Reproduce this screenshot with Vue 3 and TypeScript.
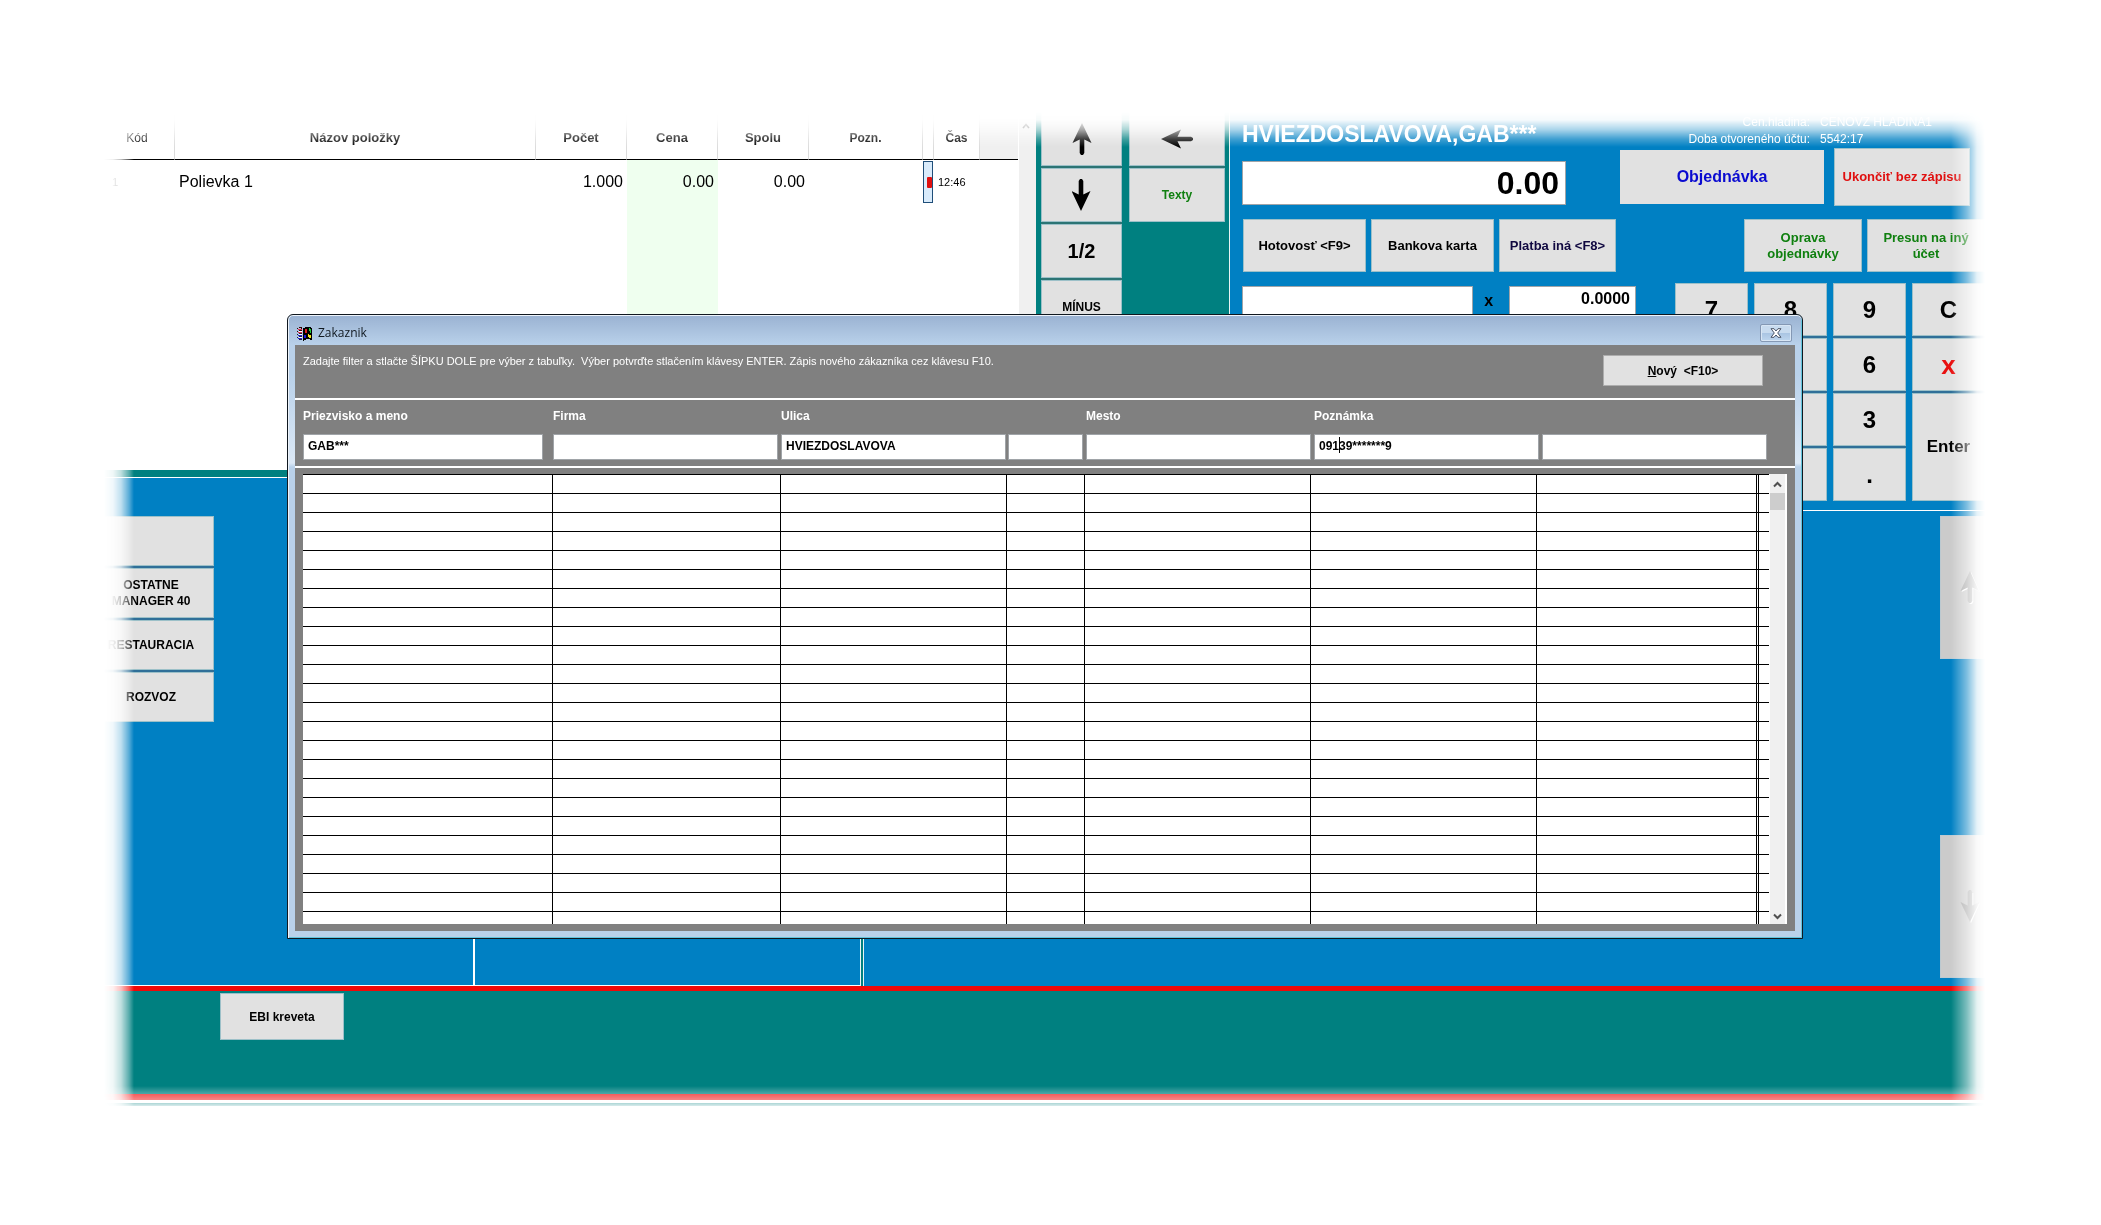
<script setup lang="ts">
import { ref } from 'vue'

interface FilterField {
  id: string
  label: string
  value: string
  gap: number
}

const filters = ref<FilterField[]>([
  { id: 'name', label: 'Priezvisko a meno', value: 'GAB***', gap: 10 },
  { id: 'company', label: 'Firma', value: '', gap: 3 },
  { id: 'street', label: 'Ulica', value: 'HVIEZDOSLAVOVA', gap: 2 },
  { id: 'number', label: '', value: '', gap: 3 },
  { id: 'city', label: 'Mesto', value: '', gap: 3 },
  { id: 'note', label: 'Poznámka', value: '09139*******9', gap: 3 },
  { id: 'extra', label: '', value: '', gap: 0 },
])

const gridRows = 24
const gridCols = ['auto', 'c228', 'c226', 'c78', 'c226', 'c226', 'c220', 'c2', 'c10']

const keypad: string[][] = [
  ['7'],
  ['8', '', '', ''],
  ['9', '6', '3', '.'],
]

const groups = ['', 'OSTATNE\nMANAGER 40', 'RESTAURACIA', 'ROZVOZ']

const total = ref('0.00')
const code = ref('')
const amount = ref('0.0000')
</script>

<template>
  <div class="page">
    <main class="stage">
      <div class="top">
        <div class="left">
          <div class="order">
            <div class="sheet">
              <table class="items">
                <colgroup>
                  <col class="w-code" /><col /><col class="w-num" /><col class="w-num price" /><col class="w-num" />
                  <col class="w-note" /><col class="w-mark" /><col class="w-time" /><col class="w-end" />
                </colgroup>
                <thead>
                  <tr>
                    <th class="thin">Kód</th>
                    <th>Názov položky</th>
                    <th>Počet</th>
                    <th>Cena</th>
                    <th>Spolu</th>
                    <th class="small">Pozn.</th>
                    <th></th>
                    <th class="small">Čas</th>
                    <th class="rest"></th>
                  </tr>
                </thead>
                <tbody>
                  <tr class="item">
                    <td class="idx">1</td>
                    <td class="name">Polievka 1</td>
                    <td class="num">1.000</td>
                    <td class="num">0.00</td>
                    <td class="num">0.00</td>
                    <td></td>
                    <td class="flag"><span class="marker"><i></i></span></td>
                    <td class="time">12:46</td>
                    <td></td>
                  </tr>
                  <tr><td v-for="n in 9" :key="n"></td></tr>
                </tbody>
              </table>
              <div class="side-scroll">
                <svg width="8" height="6" viewBox="0 0 8 6"><path d="M1 5 4 1.5 7 5" fill="none" stroke="#606060" stroke-width="1.6" /></svg>
              </div>
            </div>
            <div class="functions">
              <div class="fcol first">
                <button type="button" aria-label="Hore">
                  <svg width="20" height="32" viewBox="0 0 20 32"><path d="M10 0 19.5 20 12.3 16.5V30L11 32H9L7.700 30V16.500L.5 20Z" /></svg>
                </button>
                <button type="button" aria-label="Dole">
                  <svg width="20" height="32" viewBox="0 0 20 32"><path d="M9 32 -.5 12 6.700 15.500V2L8 0H10L11.300 2V15.500L18.500 12Z" /></svg>
                </button>
                <button type="button" class="t20">1/2</button>
                <button type="button" class="t12">MÍNUS</button>
              </div>
              <div class="fcol second">
                <button type="button" aria-label="Späť">
                  <svg width="32" height="20" viewBox="0 0 32 20"><path d="M0 10 20 .5 16.500 7.700H30L32 9V11L30 12.300H16.500L20 19.500Z" /></svg>
                </button>
                <button type="button" class="t12 green">Texty</button>
              </div>
            </div>
          </div>
          <div class="strip"></div>
        </div>

        <section class="account">
          <div class="head">
            <div class="head-left">
              <h1>HVIEZDOSLAVOVA,GAB***</h1>
              <input v-model="total" class="total" aria-label="Suma" />
            </div>
            <div class="head-right">
              <dl class="info">
                <dt>Cen.hladina:</dt><dd>CENOVZ HLADINA1</dd>
                <dt>Doba otvoreného účtu:</dt><dd>5542:17</dd>
              </dl>
              <div class="actions">
                <button type="button" class="order-btn">Objednávka</button>
                <button type="button" class="quit-btn">Ukončiť bez zápisu</button>
              </div>
            </div>
          </div>
          <div class="payments">
            <button type="button" class="pay">Hotovosť &lt;F9&gt;</button>
            <button type="button" class="pay">Bankova karta</button>
            <button type="button" class="pay other">Platba iná &lt;F8&gt;</button>
            <button type="button" class="fix push green">Oprava<br />objednávky</button>
            <button type="button" class="fix green">Presun na iný<br />účet</button>
          </div>
          <div class="entry">
            <input v-model="code" class="code" aria-label="Kód položky" />
            <span class="times">x</span>
            <input v-model="amount" class="amount" aria-label="Množstvo" />
            <div class="keypad">
              <div v-for="(col, i) in keypad" :key="i" class="kcol">
                <button v-for="(k, j) in col" :key="j" type="button">{{ k }}</button>
              </div>
              <div class="kcol">
                <button type="button">C</button>
                <button type="button" class="red">x</button>
                <button type="button" class="enter">Enter</button>
              </div>
            </div>
          </div>
        </section>
      </div>

      <div class="middle">
        <div class="pane groups">
          <div class="group-list">
            <button v-for="(g, i) in groups" :key="i" type="button">{{ g }}</button>
          </div>
        </div>
        <div class="pane centre"></div>
        <div class="divider"></div>
        <div class="pane goods">
          <div class="pager">
            <button type="button" disabled aria-label="Predošlá strana">
              <svg width="20" height="34" viewBox="0 0 20 34"><path d="M11 1 20 21 13.300 17.500V31L12 33H10L8.700 31V17.500L1.500 21Z" fill="#fff" /><path d="M10 0 19 20 12.300 16.500V30L11 32H9L7.700 30V16.500L.5 20Z" fill="#a6a6a6" /></svg>
            </button>
            <button type="button" disabled aria-label="Ďalšia strana">
              <svg width="20" height="34" viewBox="0 0 20 34"><path d="M11 33 1.500 13 8.700 16.500V3H13.300V16.500L20 13Z" fill="#fff" /><path d="M10 32 .5 12 7.700 15.500V2L9 0H11L12.300 2V15.500L19.500 12Z" fill="#a6a6a6" /></svg>
            </button>
          </div>
        </div>
      </div>

      <footer class="bottom">
        <button type="button">EBI kreveta</button>
      </footer>
      <div class="edge"></div>

      <section class="window" role="dialog" aria-labelledby="win-title">
        <header class="titlebar">
          <svg class="logo" width="16" height="15" viewBox="0 0 16 15" shape-rendering="crispEdges">
            <path d="M6 2h2V1h6v1h1v12h-2v-1H9v1H7v1H6Z" fill="#000" />
            <path d="M0 2h1v1H0zM0 5h1v1H0zM2 1h3v1H2zM2 4h3v1H2zM4 2h1v1H4z" fill="#300" />
            <path d="M1 3h4v1H1zM1 6h4v1H1z" fill="#e03050" />
            <path d="M1 9h4v1H1zM1 12h4v1H1z" fill="#2020d0" />
            <path d="M2 5h3v1H2zM2 8h3v1H2zM2 11h3v1H2z" fill="#fff" />
            <path d="M0 8h1v1H0zM0 11h1v1H0zM2 7h3v1H2zM2 10h3v1H2zM2 13h3v1H2z" fill="#223" />
            <path d="M8 3h2v4H8z" fill="#e02020" />
            <path d="M12 2h1v1h1v4h-1V5h-1z" fill="#20d040" />
            <path d="M7 9h2v3H7z" fill="#1818e0" />
            <path d="M11 8h1v1h2v3h-2v-1h-1z" fill="#f0e820" />
          </svg>
          <h2 id="win-title">Zakaznik</h2>
          <button type="button" class="close" aria-label="Zavrieť">
            <svg width="12" height="10" viewBox="0 0 12 10"><path d="M1 .7H4L6 3 8 .7H11L7.700 5 11 9.300H8L6 7 4 9.300H1L4.300 5Z" fill="#fff" stroke="#4a5568" stroke-width="1" /></svg>
          </button>
        </header>
        <div class="body">
          <div class="hint">
            <p>Zadajte filter a stlačte ŠÍPKU DOLE pre výber z tabuľky.&nbsp; Výber potvrďte stlačením klávesy ENTER. Zápis nového zákazníka cez klávesu F10.</p>
            <button type="button"><span><u>N</u>ový&nbsp; &lt;F10&gt;</span></button>
          </div>
          <form class="filters" @submit.prevent>
            <div v-for="f in filters" :key="f.id" class="field" :style="{ paddingRight: f.gap + 'px' }">
              <label :for="f.id">{{ f.label }}</label>
              <input :id="f.id" v-model="f.value" type="text" autocomplete="off" />
              <span v-if="f.id === 'note'" class="caret"></span>
            </div>
          </form>
          <div class="list">
            <div class="clip">
              <table class="customers">
                <colgroup><col v-for="(c, i) in gridCols" :key="i" :class="c" /></colgroup>
                <tbody>
                  <tr v-for="r in gridRows" :key="r"><td v-for="(c, i) in gridCols" :key="i"></td></tr>
                </tbody>
              </table>
            </div>
            <div class="scroll">
              <svg width="9" height="7" viewBox="0 0 9 7"><path d="M1 5.500 4.500 2 8 5.500" fill="none" stroke="#505050" stroke-width="2" /></svg>
              <div class="thumb"></div>
              <svg class="down" width="9" height="7" viewBox="0 0 9 7"><path d="M1 1.500 4.500 5 8 1.500" fill="none" stroke="#505050" stroke-width="2" /></svg>
            </div>
          </div>
        </div>
      </section>
    </main>
  </div>
</template>

<style>
body {
  margin: 0;
  background: #fff;
}
</style>

<style scoped>
* {
  box-sizing: border-box;
}
.page {
  padding: 112px 116px 119px 88px;
  font-family: "Liberation Sans", Arial, sans-serif;
  font-size: 12px;
  color: #000;
}
.stage {
  position: relative;
  overflow: hidden;
  background: #0080c3;
  mask-image:
    linear-gradient(to right, transparent 16px, rgba(0, 0, 0, 0.06) 25px, rgba(0, 0, 0, 0.25) 33px, rgba(0, 0, 0, 0.65) 41px, #000 46px, #000 calc(100% - 34px), rgba(0, 0, 0, 0.5) calc(100% - 18px), rgba(0, 0, 0, 0.1) calc(100% - 8px), transparent),
    linear-gradient(to bottom, transparent, rgba(0, 0, 0, 0.04) 8px, rgba(0, 0, 0, 0.35) 18px, rgba(0, 0, 0, 0.75) 27px, #000 35px, #000 calc(100% - 20px), rgba(0, 0, 0, 0.65) calc(100% - 11px), rgba(0, 0, 0, 0.5) calc(100% - 6px), rgba(0, 0, 0, 0.15) 100%);
  mask-composite: intersect;
}
button {
  font: bold 12px/16px "Liberation Sans", Arial, sans-serif;
  color: #000;
  padding: 0;
  border: 1px solid #9cc0c8;
  border-radius: 0;
  background: #e1e1e1;
  display: flex;
  align-items: center;
  justify-content: center;
  text-align: center;
  white-space: pre-line;
}
input {
  font: bold 12px/16px "Liberation Sans", Arial, sans-serif;
  color: #000;
  border: 1px solid #a0a4a8;
  border-radius: 0;
  background: #fff;
  outline: none;
  min-width: 0;
}
button.t12 { font-size: 12px; }
button.t20 { font-size: 20px; }
button.green { color: #108010; }

.top {
  display: flex;
}
.left {
  flex: 1;
  min-width: 0;
}
.order {
  display: flex;
  height: 358px;
}
.sheet {
  flex: 1;
  min-width: 0;
  display: flex;
  background: #fff;
}
.items {
  flex: 1;
  min-width: 0;
  height: 358px;
  table-layout: fixed;
  border-collapse: separate;
  border-spacing: 0;
}
.items .w-code { width: 87px; }
.items .w-num { width: 91px; }
.items .price { background: #efffef; }
.items .w-note { width: 114px; }
.items .w-mark { width: 11px; }
.items .w-time { width: 46px; }
.items .w-end { width: 38px; }
.items th {
  height: 48px;
  padding: 4px 0 0;
  border-bottom: 1px solid #000;
  border-right: 1px solid #dcdcdc;
  background: #fff;
  font-size: 13px;
  line-height: 16px;
}
.items th.thin {
  padding-left: 12px;
  font-size: 12px;
  font-weight: normal;
}
.items th.small {
  font-size: 12px;
}
.items th.rest {
  background: #f0f0f0;
  border-right: 0;
}
.items td {
  padding: 0;
}
.items .item td {
  height: 44px;
}
.items .name {
  padding-left: 4px;
  font-size: 16px;
}
.items .num {
  padding-right: 4px;
  font-size: 16px;
  text-align: right;
}
.items .idx,
.items .time {
  font-size: 11px;
}
.items .idx {
  padding-left: 24px;
}
.items .time {
  padding-left: 4px;
}
.items .flag {
  padding-top: 1px;
  vertical-align: top;
}
.marker {
  display: flex;
  align-items: center;
  justify-content: flex-end;
  width: 10px;
  height: 42px;
  border: 1px solid #1f4e79;
  background: #d9ebfb;
}
.marker i {
  width: 5px;
  height: 11px;
  border-radius: 1px;
  background: #e01010;
}
.side-scroll {
  width: 18px;
  padding: 6px 3px 0 0;
  border-left: 1px solid #fff;
  background: #f0f0f0;
  text-align: center;
}
.functions {
  width: 194px;
  padding-left: 5px;
  display: flex;
  align-items: flex-start;
  gap: 7px;
  background: #008080;
  border-right: 1px solid #e8f4f4;
}
.fcol {
  display: flex;
  flex-direction: column;
  gap: 2px;
  background: #2b7474;
}
.fcol.first { width: 81px; }
.fcol.second { width: 96px; }
.fcol button {
  height: 54px;
}
.strip {
  height: 8px;
  background: #008080;
  border-bottom: 1px solid #fff;
}

.account {
  width: 755px;
  padding: 0 0 9px 12px;
  overflow: hidden;
  border-bottom: 1px solid #fff;
}
.head {
  display: flex;
}
.head-left {
  width: 324px;
}
h1 {
  height: 49px;
  margin: 0;
  padding-top: 9px;
  font-size: 23px;
  line-height: 26px;
  color: #fff;
  white-space: nowrap;
}
.total {
  display: block;
  width: 100%;
  height: 44px;
  padding: 0 6px;
  font-size: 32px;
  line-height: 40px;
  text-align: right;
}
.head-right {
  flex: 1;
  padding-left: 54px;
}
.info {
  display: grid;
  grid-template-columns: 190px 1fr;
  column-gap: 10px;
  height: 36px;
  margin: 0;
  padding-top: 3px;
  font-size: 12px;
  line-height: 14px;
  color: #fff;
  white-space: nowrap;
}
.info dt {
  text-align: right;
}
.info dd {
  margin: 0;
}
.actions {
  display: flex;
  gap: 10px;
}
.order-btn {
  width: 204px;
  height: 54px;
  margin-top: 2px;
  border-color: #e1e1e1;
  font-size: 16px;
  color: #0a0ad0;
}
.quit-btn {
  width: 136px;
  height: 58px;
  font-size: 13px;
  color: #e01010;
}
.payments {
  display: flex;
  gap: 5px;
  margin-top: 13px;
  padding-left: 1px;
}
.payments button {
  flex: none;
  height: 53px;
  font-size: 13px;
}
.pay { width: 123px; }
.payments .other {
  width: 117px;
  color: #100840;
}
.fix { width: 118px; }
.payments .push { margin-left: 123px; }
.entry {
  display: flex;
  align-items: flex-start;
  margin-top: 11px;
}
.code,
.amount {
  height: 30px;
  margin-top: 3px;
}
.code { width: 232px; }
.times {
  width: 36px;
  padding: 8px 4px 0 0;
  text-align: center;
  font-size: 16px;
  line-height: 20px;
  font-weight: bold;
}
.amount {
  width: 128px;
  padding: 0 5px 4px;
  font-size: 16px;
  text-align: right;
}
.keypad {
  display: flex;
  flex: none;
  align-items: flex-start;
  gap: 6px;
  margin-left: 39px;
}
.kcol {
  display: flex;
  flex-direction: column;
  gap: 2px;
  width: 73px;
  background: #2f6f98;
}
.kcol button {
  height: 53px;
  font-size: 24px;
}
.kcol .red {
  font-size: 26px;
  color: #e81010;
}
.kcol .enter {
  height: 108px;
  font-size: 17px;
}

.middle {
  display: flex;
}
.pane {
  height: 475px;
}
.groups {
  width: 387px;
  border-right: 2px solid #fff;
  border-bottom: 1px solid #fff;
}
.group-list {
  display: flex;
  flex-direction: column;
  gap: 2px;
  width: 126px;
  margin-top: 5px;
  background: #2f6f98;
}
.group-list button {
  height: 50px;
}
.centre {
  width: 385px;
  border-bottom: 1px solid #fff;
}
.divider {
  width: 4px;
  border: solid #e8f4f4;
  border-width: 0 1px;
  background: #008080;
}
.goods {
  flex: 1;
  display: flex;
  justify-content: flex-end;
}
.pager {
  display: flex;
  flex-direction: column;
  justify-content: space-between;
  width: 45px;
  padding: 5px 0 8px;
}
.pager button {
  width: 60px;
  height: 143px;
  border-color: #bcc9d0;
  background: #cbcbcb;
}
.bottom {
  height: 108px;
  padding: 2px 0 0 132px;
  border-top: 5px solid #f00808;
  background: #008080;
}
.bottom button {
  width: 124px;
  height: 47px;
}
.edge {
  height: 12px;
  border-top: 6px solid #f01010;
  border-bottom: 3px solid #008080;
  background: #fff;
}

.window {
  position: absolute;
  top: 202px;
  left: 199px;
  right: 182px;
  padding: 0 7px 7px;
  border: 1px solid #101820;
  border-radius: 6px 6px 0 0;
  background: linear-gradient(to bottom, #9ab2d2, #b9d1ea 30px, #b9d1ea 60px, #dce9f6 148px, #b9d1ea 152px);
  box-shadow: inset 0 1px #eef4fb, inset 1px 0 #eef4fb, inset -1px -1px #62c4dc;
}
.titlebar {
  display: flex;
  align-items: center;
  height: 30px;
  padding: 6px 3px 0 2px;
}
.logo {
  margin-right: 5px;
}
h2 {
  flex: 1;
  margin: 0;
  font: normal 12px/16px "Open Sans", "Noto Sans", sans-serif;
  color: #101820;
}
.close {
  width: 32px;
  height: 18px;
  border: 1px solid #8498b4;
  border-radius: 2px;
  background: linear-gradient(#c8dbef 50%, #a9c4e2 50%, #bed6ee);
  box-shadow: inset 0 0 0 1px #d8e6f5;
}
.body {
  background: #808080;
  padding-bottom: 7px;
}
.hint {
  display: flex;
  justify-content: space-between;
  align-items: flex-start;
  height: 55px;
  padding: 10px 32px 0 8px;
  border-bottom: 2px solid #fff;
}
.hint p {
  margin: 0;
  font-size: 11px;
  line-height: 13px;
  color: #fff;
}
.hint button {
  flex: none;
  width: 160px;
  height: 31px;
  border-color: #adadad;
  font-size: 12px;
}
.filters {
  display: grid;
  grid-template-columns: minmax(0, 1fr) 228px 227px 78px 228px 228px 225px;
  height: 68px;
  padding: 8px 28px 0 8px;
  border-bottom: 2px solid #fff;
}
.field {
  position: relative;
}
.field label {
  display: block;
  height: 26px;
  line-height: 16px;
  font-weight: bold;
  color: #fff;
}
.field input {
  display: block;
  width: 100%;
  height: 26px;
  padding: 0 4px 2px;
}
.caret {
  position: absolute;
  left: 25px;
  top: 29px;
  width: 1px;
  height: 16px;
  background: #000;
}
.list {
  display: flex;
  height: 450px;
  margin: 6px 8px 0;
  background: #fff;
}
.clip {
  flex: 1;
  min-width: 0;
  overflow: hidden;
  border-top: 1px solid #000;
}
.customers {
  width: 100%;
  table-layout: fixed;
  border-collapse: separate;
  border-spacing: 0;
}
.customers .c228 { width: 228px; }
.customers .c226 { width: 226px; }
.customers .c78 { width: 78px; }
.customers .c220 { width: 220px; }
.customers .c2 { width: 2px; }
.customers .c10 { width: 10px; }
.customers td {
  height: 19px;
  padding: 0;
  border: solid #000;
  border-width: 0 1px 1px 0;
}
.customers td:last-child {
  border-right: 0;
}
.scroll {
  display: flex;
  flex-direction: column;
  align-items: center;
  width: 18px;
  padding: 7px 0 4px;
  border: solid #fff;
  border-width: 0 2px 0 1px;
  background: #f0f0f0;
}
.thumb {
  width: 15px;
  height: 17px;
  margin-top: 5px;
  background: #cdcdcd;
}
.down {
  margin-top: auto;
}
</style>
